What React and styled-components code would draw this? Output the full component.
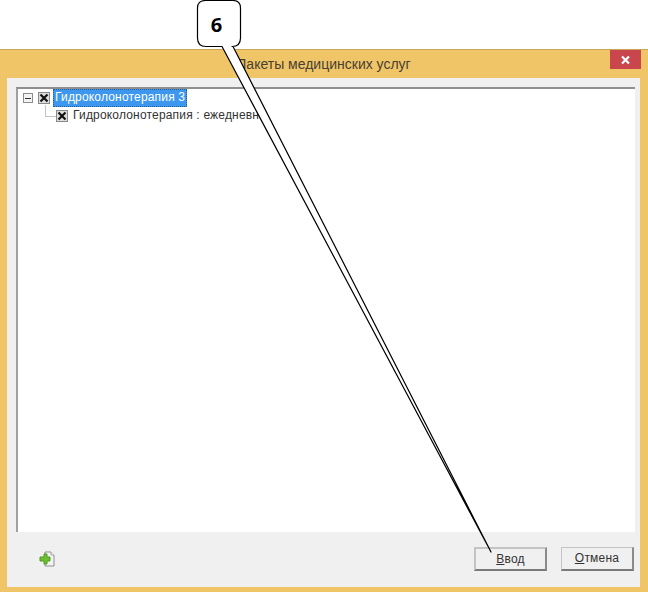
import styled, { createGlobalStyle } from 'styled-components';

const GlobalStyle = createGlobalStyle`
	html, body {
		margin: 0;
		padding: 0;
		background: #fff;
	}
	* {
		box-sizing: border-box;
	}
`;

const Page = styled.div`
	position: relative;
	width: 648px;
	height: 593px;
	padding-top: 49px;
	overflow: hidden;
	font-family: 'Liberation Sans', Arial, sans-serif;
	font-size: 12px;
	color: #333;
`;

const Frame = styled.div`
	height: 543px;
	display: flex;
	flex-direction: column;
	padding: 0 8px 5px 7px;
	background: #efc568;
	border-top: 1px solid #c9a75a;
`;

const TitleBar = styled.div`
	position: relative;
	height: 28px;
	flex: none;
	display: flex;
	align-items: center;
	justify-content: center;
	font-size: 14px;
	color: #4a4030;
`;

const CloseButton = styled.div`
	position: absolute;
	top: 0;
	right: -1px;
	width: 31px;
	height: 19px;
	display: flex;
	align-items: center;
	justify-content: center;
	background: #c9474c;
`;

const Client = styled.div`
	flex: 1;
	display: flex;
	flex-direction: column;
	padding: 9px 5px 0 9px;
	background: #f0f0f0;
`;

const TreeBox = styled.div`
	height: 445px;
	padding: 0 0 0 5px;
	background: #fff;
	border-top: 2px solid #8f8f8f;
	border-left: 2px solid #a0a0a0;
`;

const TreeRow = styled.div`
	height: 18px;
	display: flex;
	align-items: center;
	padding-left: ${props => props.$indent || 0}px;
`;

const Expander = styled.div`
	width: 10px;
	height: 10px;
	margin-right: 5px;
	flex: none;
	display: flex;
	align-items: center;
	justify-content: center;
	background: #f4f4f4;
	border: 1px solid #8c8c8c;

	&::before {
		content: '';
		width: 6px;
		height: 1px;
		background: #333;
	}
`;

const Connector = styled.div`
	width: 11px;
	height: 12px;
	margin-top: -11px;
	flex: none;
	border-left: 1px solid #c4c4c4;
	border-bottom: 1px solid #c4c4c4;
`;

const Check = styled.div`
	width: 12px;
	height: 12px;
	flex: none;
	display: flex;
	align-items: center;
	justify-content: center;
	margin-right: ${props => props.$gap}px;
	background: #dedede;
	border: 1px solid #8a8a8a;
`;

const NodeLabel = styled.div`
	height: 18px;
	line-height: 17px;
	padding: 0 2px;
	white-space: nowrap;
	letter-spacing: 0.18px;
	color: ${props => (props.$selected ? '#fff' : '#333')};
	background: ${props => (props.$selected ? '#3d97ee' : 'transparent')};
	outline: ${props => (props.$selected ? '1px dotted #2a5f96' : 'none')};
	outline-offset: -1px;
`;

const Footer = styled.div`
	flex: 1;
	display: flex;
	align-items: center;
	justify-content: space-between;
	padding: 0 1px 2px 22px;
`;

const ButtonRow = styled.div`
	display: flex;
	gap: 14px;
`;

const Button = styled.div`
	width: 73px;
	height: 24px;
	display: flex;
	align-items: center;
	justify-content: center;
	background: #f0f0f0;
	border: 1px solid;
	border-color: #c4c4c4 #8a8a8a #7a7a7a #c4c4c4;
	border-width: ${props => (props.$primary ? '2px' : '1px 2px 2px 1px')};
	color: #333;
	letter-spacing: 0.2px;

	u {
		text-decoration-thickness: 1px;
	}
`;

const Callout = styled.svg`
	position: absolute;
	top: 0;
	left: 0;
	pointer-events: none;
`;

const CalloutNumber = styled.div`
	position: absolute;
	top: 11px;
	left: 195px;
	width: 43px;
	text-align: center;
	font-family: 'Open Sans', 'Liberation Sans', sans-serif;
	font-weight: 700;
	font-size: 20px;
	line-height: 28px;
	color: #000;
`;

const CrossMark = () => (
	<svg width='10' height='10' viewBox='0 0 10 10'>
		<path d='M1.5 1.5 L8.5 8.5 M8.5 1.5 L1.5 8.5' stroke='#111' strokeWidth='2.2' fill='none' />
	</svg>
);

export default function App() {
	return (
		<>
			<GlobalStyle />
			<Page>
				<Frame>
					<TitleBar>
						Пакеты медицинских услуг
						<CloseButton>
							<svg width='11' height='10' viewBox='0 0 11 10'>
								<path d='M2 1.5 L9 8.5 M9 1.5 L2 8.5' stroke='#fff' strokeWidth='2.2' fill='none' />
							</svg>
						</CloseButton>
					</TitleBar>
					<Client>
						<TreeBox>
							<TreeRow>
								<Expander />
								<Check $gap={3}>
									<CrossMark />
								</Check>
								<NodeLabel $selected>Гидроколонотерапия 3</NodeLabel>
							</TreeRow>
							<TreeRow $indent={22}>
								<Connector />
								<Check $gap={3}>
									<CrossMark />
								</Check>
								<NodeLabel>Гидроколонотерапия : ежедневно</NodeLabel>
							</TreeRow>
						</TreeBox>
						<Footer>
							<svg width='18' height='18' viewBox='0 0 18 18'>
								<path d='M7 2 H13 L16 5 V16 H7 Z' fill='#f4f4f4' stroke='#8f8f8f' />
								<path d='M13 2 V5 H16' fill='#fff' stroke='#a8a8a8' />
								<path d='M6 4 L9 4 L9 7 L12 7 L12 11 L9 11 L9 14 L6 14 L6 11 L2 11 L2 7 L6 7 Z' fill='#6cc02f' stroke='#4f9a25' strokeLinejoin='round' />
							</svg>
							<ButtonRow>
								<Button $primary>
									<span><u>В</u>вод</span>
								</Button>
								<Button>
									<span><u>О</u>тмена</span>
								</Button>
							</ButtonRow>
						</Footer>
					</Client>
				</Frame>
				<Callout width='648' height='593' viewBox='0 0 648 593'>
					<path
						d='M205.5 0.5 H233 Q240.5 0.5 240.5 8 V38 Q240.5 46.5 232 46.5 H233 L491 552 L222 46.5 H206 Q197.5 46.5 197.5 38 V8 Q197.5 0.5 205.5 0.5 Z'
						fill='#fff'
						stroke='#000'
						strokeWidth='1.2'
						strokeLinejoin='round'
					/>
				</Callout>
				<CalloutNumber>6</CalloutNumber>
			</Page>
		</>
	);
}
